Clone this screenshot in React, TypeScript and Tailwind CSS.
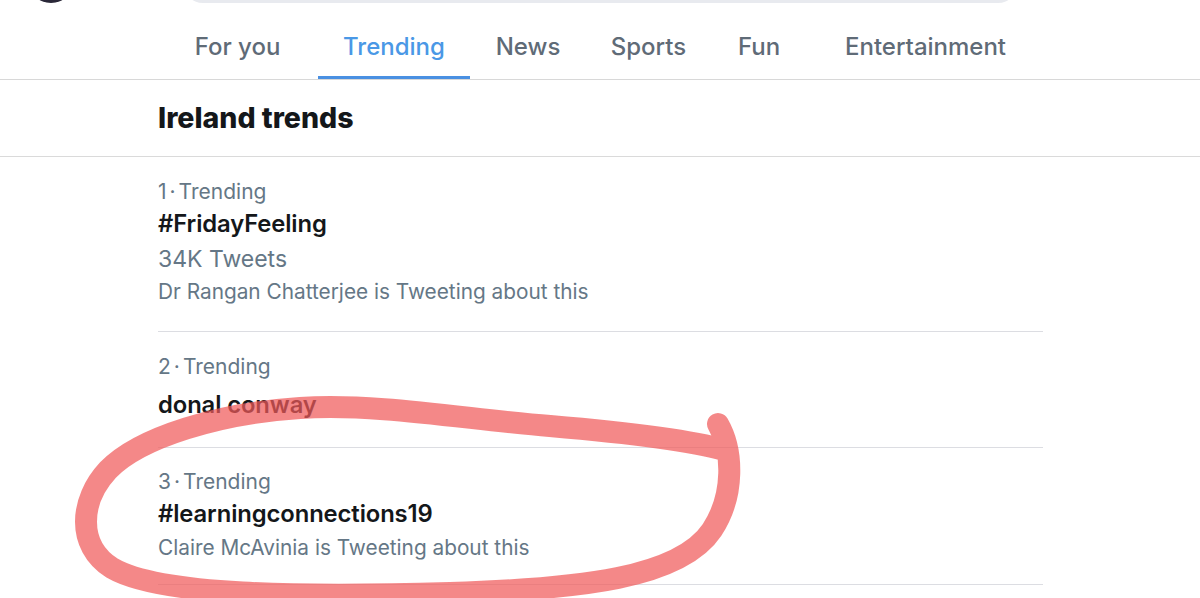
import React from "react";

const TABS = [
  { label: "For you", w: "w-[161px]" },
  { label: "Trending", w: "w-[152px]", active: true },
  { label: "News", w: "w-[116px]" },
  { label: "Sports", w: "w-[125px]" },
  { label: "Fun", w: "w-[96px]" },
  { label: "Entertainment", w: "w-[237px]" },
];

function Tab({ label, w, active }: { label: string; w: string; active?: boolean }) {
  return (
    <div className={`relative ${w} shrink-0 pt-[29px] text-center`}>
      <span
        className={`text-[24px] leading-[30px] font-medium ${
          active ? "text-[#4a98e6]" : "text-[#5f6b77]"
        }`}
      >
        {label}
      </span>
      {active ? <div className="absolute bottom-0 left-0 h-[3px] w-full bg-[#4a90e2]" /> : null}
    </div>
  );
}

function Label({ n }: { n: number }) {
  return (
    <p className="text-[21px] leading-[26px] text-[#657786]">
      {n}
      <span className="mx-[3px]">·</span>Trending
    </p>
  );
}

function Title({ children, className = "" }: { children: React.ReactNode; className?: string }) {
  return (
    <p className={`text-[23.8px] leading-[30px] font-semibold tracking-[-0.1px] text-[#14171a] ${className}`}>
      {children}
    </p>
  );
}

function Meta({ children, className = "" }: { children: React.ReactNode; className?: string }) {
  return <p className={`text-[20.8px] leading-[26px] text-[#657786] ${className}`}>{children}</p>;
}

function Scribble() {
  // red marker loop drawn over the third trend
  return (
    <svg
      className="pointer-events-none absolute left-0 top-0"
      width="1200"
      height="598"
      viewBox="0 0 1200 598"
    >
      <path
        d="M 724 450 C 690 440, 620 432, 550 426 C 470 420, 380 403, 300 408 C 220 413, 140 437, 108 470 C 80 500, 76 545, 112 568 C 160 596, 300 597, 450 593 C 580 589, 680 578, 712 530 C 735 495, 733 450, 718 424"
        fill="none"
        stroke="#f05a5a"
        strokeOpacity="0.72"
        strokeWidth="22"
        strokeLinecap="round"
        strokeLinejoin="round"
      />
    </svg>
  );
}

export default function App() {
  return (
    <div className="relative h-[598px] w-[1200px] overflow-hidden bg-white font-['Inter','Liberation_Sans',sans-serif]">
      <div className="flex h-[3px] items-end overflow-hidden">
        <div className="ml-[28px] h-[46px] w-[46px] shrink-0 rounded-full bg-[#2a2838]" />
        <div className="ml-[109px] h-[40px] w-[835px] shrink-0 rounded-full bg-[#e8eaef]" />
      </div>

      <div className="flex h-[77px] border-b border-[#d8d8d8] pl-[157px]">
        {TABS.map((t) => (
          <Tab key={t.label} {...t} />
        ))}
      </div>

      <div className="border-b border-[#dadada] py-[21px] pl-[158px]">
        <h1 className="text-[28.5px] leading-[34px] font-extrabold text-[#14171a]">Ireland trends</h1>
      </div>

      <div className="ml-[158px] w-[885px]">
        <div className="border-b border-[#dcdde2] pt-[22px] pb-[26px]">
          <Label n={1} />
          <Title className="mt-[4px]">#FridayFeeling</Title>
          <p className="mt-[6px] text-[23px] leading-[28px] text-[#657786]">34K Tweets</p>
          <Meta className="mt-[6px]">Dr Rangan Chatterjee is Tweeting about this</Meta>
        </div>

        <div className="border-b border-[#dcdde2] pt-[22px] pb-[27px]">
          <Label n={2} />
          <Title className="mt-[10px]">donal conway</Title>
        </div>

        <div className="border-b border-[#dcdde2] pt-[21px] pb-[23px]">
          <Label n={3} />
          <Title className="mt-[4px]">#learningconnections19</Title>
          <Meta className="mt-[6px]">Claire McAvinia is Tweeting about this</Meta>
        </div>
      </div>

      <Scribble />
    </div>
  );
}
